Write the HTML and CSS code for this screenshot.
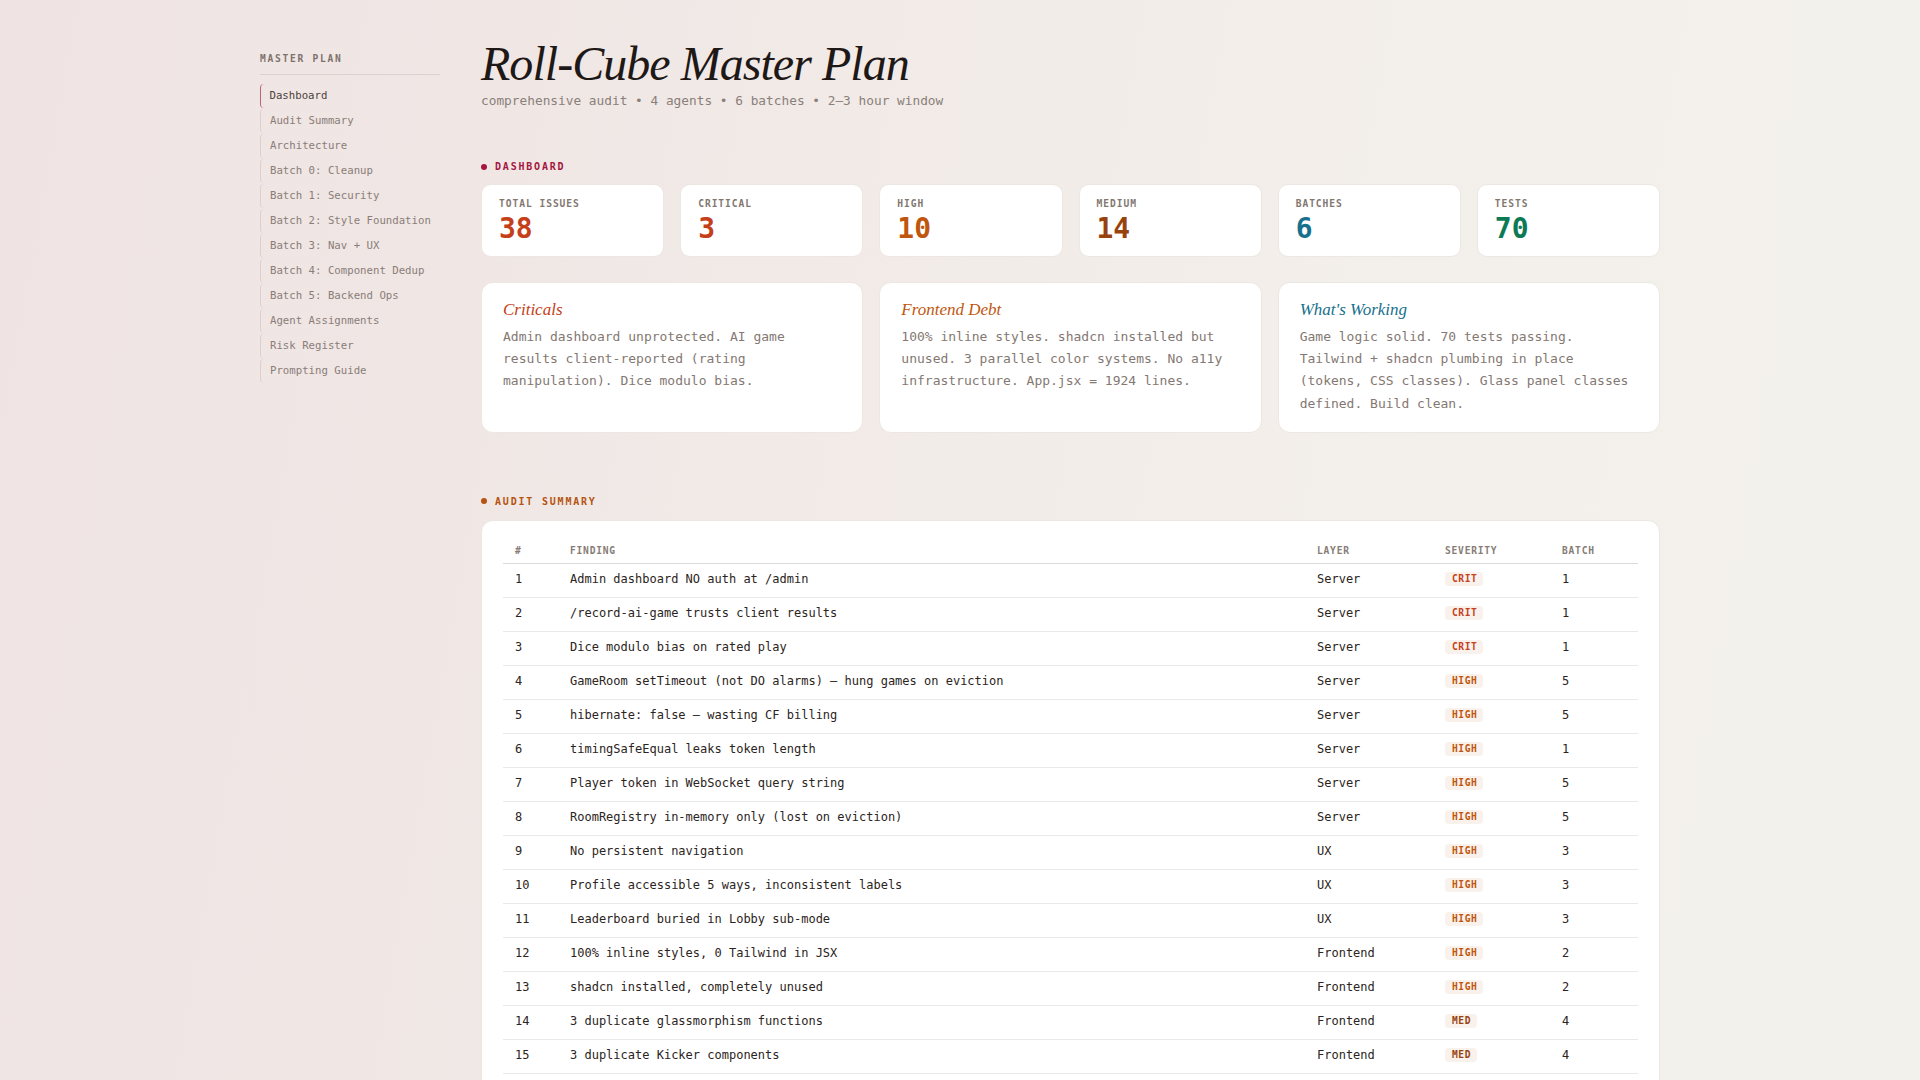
FILE: index.html
```html
<!DOCTYPE html>
<html lang="en">
<head>
<meta charset="utf-8">
<title>Roll-Cube Master Plan</title>
<link rel="stylesheet" href="styles.css">
</head>
<body>
<div class="layout">
  <aside class="sidebar">
    <div class="side-label">MASTER PLAN</div>
    <nav class="side-nav">
      <a class="nav-item active">Dashboard</a>
      <a class="nav-item">Audit Summary</a>
      <a class="nav-item">Architecture</a>
      <a class="nav-item">Batch 0: Cleanup</a>
      <a class="nav-item">Batch 1: Security</a>
      <a class="nav-item">Batch 2: Style Foundation</a>
      <a class="nav-item">Batch 3: Nav + UX</a>
      <a class="nav-item">Batch 4: Component Dedup</a>
      <a class="nav-item">Batch 5: Backend Ops</a>
      <a class="nav-item">Agent Assignments</a>
      <a class="nav-item">Risk Register</a>
      <a class="nav-item">Prompting Guide</a>
    </nav>
  </aside>

  <main class="main">
    <header class="page-head">
      <h1 class="title">Roll-Cube Master Plan</h1>
      <p class="subtitle">comprehensive audit • 4 agents • 6 batches • 2–3 hour window</p>
    </header>

    <section class="section section-dash">
      <div class="section-label label-crimson"><span class="dot"></span>DASHBOARD</div>
      <div class="stats">
        <div class="stat"><div class="stat-label">TOTAL ISSUES</div><div class="stat-num c-red">38</div></div>
        <div class="stat"><div class="stat-label">CRITICAL</div><div class="stat-num c-red">3</div></div>
        <div class="stat"><div class="stat-label">HIGH</div><div class="stat-num c-orange">10</div></div>
        <div class="stat"><div class="stat-label">MEDIUM</div><div class="stat-num c-brown">14</div></div>
        <div class="stat"><div class="stat-label">BATCHES</div><div class="stat-num c-teal">6</div></div>
        <div class="stat"><div class="stat-label">TESTS</div><div class="stat-num c-green">70</div></div>
      </div>
      <div class="infos">
        <div class="info">
          <h3 class="info-title c-red">Criticals</h3>
          <p class="info-body">Admin dashboard unprotected. AI game results client-reported (rating manipulation). Dice modulo bias.</p>
        </div>
        <div class="info">
          <h3 class="info-title c-orange">Frontend Debt</h3>
          <p class="info-body">100% inline styles. shadcn installed but unused. 3 parallel color systems. No a11y infrastructure. App.jsx = 1924 lines.</p>
        </div>
        <div class="info">
          <h3 class="info-title c-teal">What's Working</h3>
          <p class="info-body">Game logic solid. 70 tests passing. Tailwind + shadcn plumbing in place (tokens, CSS classes). Glass panel classes defined. Build clean.</p>
        </div>
      </div>
    </section>

    <section class="section">
      <div class="section-label label-amber"><span class="dot"></span>AUDIT SUMMARY</div>
      <div class="table-card">
        <table class="audit">
          <thead>
            <tr>
              <th class="col-num">#</th>
              <th class="col-find">FINDING</th>
              <th class="col-layer">LAYER</th>
              <th class="col-sev">SEVERITY</th>
              <th class="col-batch">BATCH</th>
            </tr>
          </thead>
          <tbody>
            <tr><td>1</td><td>Admin dashboard NO auth at /admin</td><td>Server</td><td><span class="badge crit">CRIT</span></td><td>1</td></tr>
            <tr><td>2</td><td>/record-ai-game trusts client results</td><td>Server</td><td><span class="badge crit">CRIT</span></td><td>1</td></tr>
            <tr><td>3</td><td>Dice modulo bias on rated play</td><td>Server</td><td><span class="badge crit">CRIT</span></td><td>1</td></tr>
            <tr><td>4</td><td>GameRoom setTimeout (not DO alarms) — hung games on eviction</td><td>Server</td><td><span class="badge high">HIGH</span></td><td>5</td></tr>
            <tr><td>5</td><td>hibernate: false — wasting CF billing</td><td>Server</td><td><span class="badge high">HIGH</span></td><td>5</td></tr>
            <tr><td>6</td><td>timingSafeEqual leaks token length</td><td>Server</td><td><span class="badge high">HIGH</span></td><td>1</td></tr>
            <tr><td>7</td><td>Player token in WebSocket query string</td><td>Server</td><td><span class="badge high">HIGH</span></td><td>5</td></tr>
            <tr><td>8</td><td>RoomRegistry in-memory only (lost on eviction)</td><td>Server</td><td><span class="badge high">HIGH</span></td><td>5</td></tr>
            <tr><td>9</td><td>No persistent navigation</td><td>UX</td><td><span class="badge high">HIGH</span></td><td>3</td></tr>
            <tr><td>10</td><td>Profile accessible 5 ways, inconsistent labels</td><td>UX</td><td><span class="badge high">HIGH</span></td><td>3</td></tr>
            <tr><td>11</td><td>Leaderboard buried in Lobby sub-mode</td><td>UX</td><td><span class="badge high">HIGH</span></td><td>3</td></tr>
            <tr><td>12</td><td>100% inline styles, 0 Tailwind in JSX</td><td>Frontend</td><td><span class="badge high">HIGH</span></td><td>2</td></tr>
            <tr><td>13</td><td>shadcn installed, completely unused</td><td>Frontend</td><td><span class="badge high">HIGH</span></td><td>2</td></tr>
            <tr><td>14</td><td>3 duplicate glassmorphism functions</td><td>Frontend</td><td><span class="badge med">MED</span></td><td>4</td></tr>
            <tr><td>15</td><td>3 duplicate Kicker components</td><td>Frontend</td><td><span class="badge med">MED</span></td><td>4</td></tr>
          </tbody>
        </table>
      </div>
    </section>
  </main>
</div>
</body>
</html>
```

FILE: styles.css
```css
* { box-sizing: border-box; }

html, body { margin: 0; padding: 0; }

body {
  min-height: 100vh;
  font-family: "DejaVu Sans Mono", "Liberation Mono", monospace;
  color: #2b2421;
  background: linear-gradient(100deg, #efe4e3 0%, #f0e7e5 25%, #f2ece8 50%, #f3f0eb 75%, #f3f1ec 100%);
  background-attachment: fixed;
}

.layout {
  width: 1400px;
  margin: 0 auto;
  display: flex;
  gap: 41px;
  padding-top: 37px;
  padding-bottom: 40px;
}

/* Sidebar */
.sidebar {
  width: 180px;
  flex: none;
  padding-top: 16px;
}

.side-label {
  font-size: 9.6px;
  line-height: 12px;
  font-weight: 700;
  letter-spacing: 0.18em;
  color: #7d716c;
  padding-bottom: 9px;
  border-bottom: 1px solid #ddd1cf;
}

.side-nav {
  display: flex;
  flex-direction: column;
  gap: 1px;
  margin-top: 9px;
}

.nav-item {
  display: block;
  font-size: 10.7px;
  line-height: 14px;
  padding: 5px 0 5px 9px;
  color: #8a7d78;
  border-left: 1px solid #dccfcd;
  border-radius: 4px 0 0 4px;
  text-decoration: none;
}

.nav-item.active {
  color: #4a3f3c;
  border-left: 1.5px solid #b86577;
  padding-left: 8.5px;
}

/* Main */
.main {
  flex: 1;
  min-width: 0;
}

.page-head { margin-bottom: 49px; }

.title {
  margin: 0 0 1px;
  font-family: "Liberation Serif", "Times New Roman", serif;
  font-style: italic;
  font-weight: 400;
  font-size: 48px;
  line-height: 53px;
  letter-spacing: -0.02em;
  color: #1e1816;
}

.subtitle {
  margin: 0;
  font-size: 12.8px;
  line-height: 20px;
  color: #8a7f79;
}

.section-dash { margin-bottom: 62px; }

.section-label {
  display: flex;
  align-items: center;
  gap: 8px;
  font-size: 10px;
  line-height: 13px;
  font-weight: 700;
  letter-spacing: 0.18em;
  margin-bottom: 12px;
}

.section-dash .section-label { margin-bottom: 11px; }

.dot {
  width: 6px;
  height: 6px;
  border-radius: 50%;
  background: currentColor;
  flex: none;
}

.label-crimson { color: #a5173f; }
.label-amber { color: #b5530f; }

.stats {
  display: grid;
  grid-template-columns: repeat(6, 1fr);
  gap: 16px;
}

.stat {
  background: #ffffff;
  border: 1px solid #ede7e3;
  border-radius: 10px;
  padding: 13px 17px 12px;
}

.stat-label {
  font-size: 9.6px;
  line-height: 12px;
  font-weight: 700;
  letter-spacing: 0.1em;
  color: #82776f;
}

.stat-num {
  margin-top: 3px;
  font-size: 28px;
  line-height: 31px;
  font-weight: 700;
}

.c-red { color: #c5401a; }
.c-orange { color: #c0560d; }
.c-brown { color: #98420e; }
.c-teal { color: #17708c; }
.c-green { color: #0c7a55; }

.infos {
  display: grid;
  grid-template-columns: repeat(3, 1fr);
  gap: 16px;
  margin-top: 25px;
}

.info {
  background: #ffffff;
  border: 1px solid #ede7e3;
  border-radius: 12px;
  padding: 17px 21px 17px;
}

.info-title {
  margin: 0 0 6px;
  font-family: "Liberation Serif", "Times New Roman", serif;
  font-style: italic;
  font-weight: 400;
  font-size: 17px;
  line-height: 20px;
}

.info-body {
  margin: 0;
  font-size: 13px;
  line-height: 22.2px;
  color: #847872;
}

/* Table */
.table-card {
  background: #ffffff;
  border: 1px solid #ede7e3;
  border-radius: 12px;
  padding: 17px 21px 20px;
}

.audit {
  width: 100%;
  border-collapse: collapse;
  table-layout: fixed;
}

.audit th {
  text-align: left;
  font-size: 9.6px;
  line-height: 12px;
  font-weight: 700;
  letter-spacing: 0.08em;
  color: #877c76;
  padding: 7px 12px 6px;
  border-bottom: 1.5px solid #dedad7;
}

.col-num { width: 55px; }
.col-layer { width: 128px; }
.col-sev { width: 117px; }
.col-batch { width: 88px; }

.audit td {
  font-size: 12px;
  line-height: 15px;
  padding: 8px 12px 10px;
  color: #2b2421;
  border-bottom: 1px solid #ebe8e5;
  white-space: nowrap;
}

.badge {
  display: inline-block;
  font-size: 9.6px;
  line-height: 10px;
  font-weight: 700;
  letter-spacing: 0.06em;
  padding: 2px 6px 2px 7px;
  border-radius: 4px;
  background: #f9f1ec;
  vertical-align: middle;
}

.badge.crit { color: #c5401a; }
.badge.high { color: #c0560d; }
.badge.med { color: #98420e; }
```
